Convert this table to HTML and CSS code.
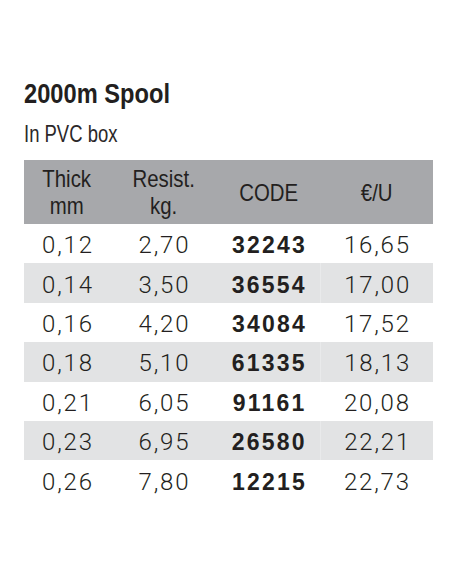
FILE: index.html
```html
<!DOCTYPE html>
<html lang="en">
<head>
<meta charset="utf-8">
<title>2000m Spool</title>
<link rel="stylesheet" href="styles.css">
</head>
<body>
<main class="sheet">
  <h1 class="title"><span class="narrow">2000m Spool</span></h1>
  <p class="subtitle"><span class="narrow">In PVC box</span></p>
  <table class="spec">
    <colgroup>
      <col class="c1"><col class="c2"><col class="c3"><col class="c4">
    </colgroup>
    <thead>
      <tr>
        <th><span class="narrow">Thick<br>mm</span></th>
        <th><span class="narrow">Resist.<br>kg.</span></th>
        <th><span class="narrow">CODE</span></th>
        <th><span class="narrow">€/U</span></th>
      </tr>
    </thead>
    <tbody>
      <tr><td>0,12</td><td>2,70</td><td class="code">32243</td><td>16,65</td></tr>
      <tr><td>0,14</td><td>3,50</td><td class="code">36554</td><td>17,00</td></tr>
      <tr><td>0,16</td><td>4,20</td><td class="code">34084</td><td>17,52</td></tr>
      <tr><td>0,18</td><td>5,10</td><td class="code">61335</td><td>18,13</td></tr>
      <tr><td>0,21</td><td>6,05</td><td class="code">91161</td><td>20,08</td></tr>
      <tr><td>0,23</td><td>6,95</td><td class="code">26580</td><td>22,21</td></tr>
      <tr><td>0,26</td><td>7,80</td><td class="code">12215</td><td>22,73</td></tr>
    </tbody>
  </table>
</main>
</body>
</html>
```

FILE: styles.css
```css
html, body {
  margin: 0;
  padding: 0;
  background: #ffffff;
}

.sheet {
  width: 409px;
  padding: 78px 0 0 24px;
  color: #231f20;
}

.narrow {
  display: inline-block;
  white-space: nowrap;
}

.title {
  margin: 0;
  font-family: "Liberation Sans", Arial, sans-serif;
  font-weight: 700;
  font-size: 28px;
  line-height: 32px;
}

.title .narrow {
  transform: scaleX(0.845);
  transform-origin: left center;
}

.subtitle {
  margin: 10px 0 0;
  font-family: "Liberation Sans", Arial, sans-serif;
  font-weight: 400;
  font-size: 24px;
  line-height: 28px;
  color: #2b2829;
}

.subtitle .narrow {
  transform: scaleX(0.77);
  transform-origin: left center;
}

.spec {
  margin-top: 12px;
  width: 409px;
  border-collapse: collapse;
  table-layout: fixed;
}

.c1 { width: 86px; }
.c2 { width: 107px; }
.c3 { width: 103px; }
.c4 { width: 113px; }

.spec th {
  background: #a7a8ab;
  height: 64px;
  padding: 0;
  font-family: "Liberation Sans", Arial, sans-serif;
  font-weight: 400;
  font-size: 24px;
  line-height: 27px;
  color: #231f20;
  text-align: center;
  vertical-align: middle;
}

.spec th .narrow {
  transform: scaleX(0.85);
  transform-origin: center center;
}

.spec td {
  height: 39.4px;
  padding: 3px 0 0;
  box-sizing: border-box;
  font-family: Roboto, "Liberation Sans", sans-serif;
  font-weight: 300;
  font-size: 24px;
  letter-spacing: 1.8px;
  text-indent: 1.8px;
  line-height: 24px;
  text-align: center;
  color: #231f20;
}

.spec tbody tr:nth-child(even) td {
  background: #e2e3e4;
}

.spec tbody tr:nth-child(even) td:nth-child(3) {
  border-right: 1px solid #e9eaeb;
}

.spec td.code {
  font-family: "Liberation Sans", Arial, sans-serif;
  font-weight: 700;
  font-size: 23px;
  letter-spacing: 2.2px;
  text-indent: 2.2px;
}
```
